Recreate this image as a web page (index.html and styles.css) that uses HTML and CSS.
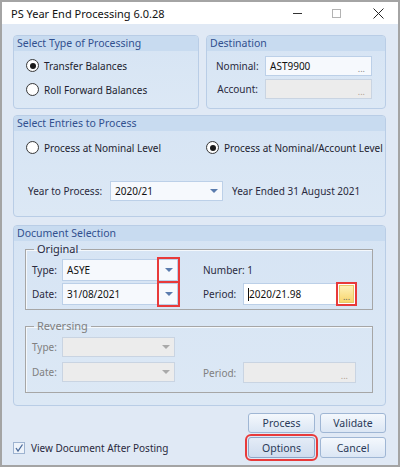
FILE: index.html
```html
<!DOCTYPE html>
<html>
<head>
<meta charset="utf-8">
<link rel="stylesheet" href="styles.css">
</head>
<body>
<div class="window">
  <div class="titlebar">
    <span class="title">PS Year End Processing 6.0.28</span>
    <div class="controls">
      <span class="ctl-min"></span>
      <span class="ctl-max"></span>
      <svg class="ctl-close" width="11" height="11" viewBox="0 0 11 11"><path d="M0.5 0.5 L10.5 10.5 M10.5 0.5 L0.5 10.5" stroke="#222" stroke-width="1" fill="none"/></svg>
    </div>
  </div>
  <div class="content">
    <div class="row-top">
      <section class="group g-type">
        <div class="ghead">Select Type of Processing</div>
        <div class="gbody type-body">
          <label class="radio"><span class="rdot on"></span>Transfer Balances</label>
          <label class="radio"><span class="rdot"></span>Roll Forward Balances</label>
        </div>
      </section>
      <section class="group g-dest">
        <div class="ghead">Destination</div>
        <div class="gbody dest-body">
          <span class="lbl">Nominal:</span>
          <div class="input"><span class="val">AST9900</span><span class="ell">...</span></div>
          <span class="lbl">Account:</span>
          <div class="input disabled"><span class="val"></span><span class="ell">...</span></div>
        </div>
      </section>
    </div>

    <section class="group g-entries">
      <div class="ghead">Select Entries to Process</div>
      <div class="gbody entries-body">
        <div class="radio-row">
          <label class="radio r-left"><span class="rdot"></span>Process at Nominal Level</label>
          <label class="radio"><span class="rdot on"></span>Process at Nominal/Account Level</label>
        </div>
        <div class="year-row">
          <span class="lbl-left">Year to Process:</span>
          <div class="combo year-combo"><span class="val">2020/21</span><span class="arrow"><span class="tri"></span></span></div>
          <span class="year-note">Year Ended 31 August 2021</span>
        </div>
      </div>
    </section>

    <section class="group g-doc">
      <div class="ghead">Document Selection</div>
      <div class="gbody doc-body">
        <fieldset class="fs fs-orig">
          <legend>Original</legend>
          <div class="fs-grid">
            <span class="lbl-left">Type:</span>
            <div class="combo orig-combo"><span class="val">ASYE</span><span class="arrow mark"><span class="tri"></span></span></div>
            <span class="lbl-left col3">Number: 1</span>
            <span></span>
            <span class="lbl-left">Date:</span>
            <div class="combo orig-combo"><span class="val">31/08/2021</span><span class="arrow mark"><span class="tri"></span></span></div>
            <span class="lbl-left col3">Period:</span>
            <div class="input period"><span class="val"><span class="caret"></span>2020/21.98</span><span class="ell-btn mark">...</span></div>
          </div>
        </fieldset>
        <fieldset class="fs fs-rev">
          <legend>Reversing</legend>
          <div class="fs-grid rev">
            <span class="lbl-left dis">Type:</span>
            <div class="combo rev-combo disabled"><span class="val"></span><span class="arrow"><span class="tri dis"></span></span></div>
            <span></span>
            <span></span>
            <span class="lbl-left dis">Date:</span>
            <div class="combo rev-combo disabled"><span class="val"></span><span class="arrow"><span class="tri dis"></span></span></div>
            <span class="lbl-left dis col3">Period:</span>
            <div class="input period disabled"><span class="val"></span><span class="ell">...</span></div>
          </div>
        </fieldset>
      </div>
    </section>

    <div class="footer">
      <label class="check"><span class="cbox"><svg width="10" height="10" viewBox="0 0 10 10"><path d="M2 5 L4 8 L8.5 1.5" stroke="#4a6a9a" stroke-width="1.3" fill="none"/></svg></span>View Document After Posting</label>
      <button class="btn b-process">Process</button>
      <button class="btn b-validate">Validate</button>
      <button class="btn b-options">Options</button>
      <button class="btn b-cancel">Cancel</button>
    </div>
  </div>
</div>
</body>
</html>
```

FILE: styles.css
```css
* { box-sizing: border-box; }
html, body { margin: 0; padding: 0; }
body {
  font-family: "Noto Sans", "Open Sans", sans-serif;
  font-size: 10px;
  color: #1e1e30;
  background: #fff;
}
.window {
  width: 400px;
  height: 467px;
  border: 2px solid #a4a4a4;
  background: #e0e9f5;
  display: flex;
  flex-direction: column;
}
.titlebar {
  height: 22px;
  background: #fff;
  display: flex;
  align-items: center;
  padding-left: 9px;
  flex: none;
}
.title {
  font-size: 11px;
  color: #111;
  flex: 1;
  padding-top: 1px;
}
.controls {
  display: flex;
  align-items: center;
  height: 100%;
  padding-right: 14px;
}
.ctl-min {
  width: 9px;
  height: 1px;
  background: #333;
  margin-right: 30px;
}
.ctl-max {
  width: 9px;
  height: 9px;
  border: 1px solid #b3b3b3;
  margin-right: 32px;
}
.ctl-close { display: block; }

.content {
  flex: 1;
  padding: 11px 12px 0 11px;
  display: flex;
  flex-direction: column;
}
.row-top {
  display: grid;
  grid-template-columns: 186px 180px;
  gap: 7px;
  height: 74px;
}
.group {
  border: 1px solid #b9cde6;
  border-radius: 4px;
  background: linear-gradient(#d6e4f4, #dce8f5);
  display: flex;
  flex-direction: column;
  overflow: hidden;
}
.ghead {
  height: 15px;
  line-height: 14px;
  padding-left: 3px;
  background: #c8dbf0;
  color: #31508f;
  font-size: 10.5px;
  flex: none;
}
.gbody { flex: 1; }

.type-body {
  padding: 8px 0 0 12px;
  display: flex;
  flex-direction: column;
  gap: 11px;
}
.radio {
  display: flex;
  align-items: center;
  height: 13px;
  white-space: nowrap;
}
.rdot {
  width: 13px;
  height: 13px;
  border-radius: 50%;
  border: 1px solid #3a3a3a;
  background: radial-gradient(circle, #fff 55%, #e8e8e8);
  margin-right: 5px;
  flex: none;
  position: relative;
}
.rdot.on::after {
  content: "";
  position: absolute;
  left: 2.5px;
  top: 2.5px;
  width: 6px;
  height: 6px;
  border-radius: 50%;
  background: #1a1a1a;
}

.dest-body {
  padding: 5px 13px 0 10px;
  display: grid;
  grid-template-columns: 42px 107px;
  column-gap: 7px;
  row-gap: 3px;
  grid-auto-rows: 20px;
  justify-content: end;
  align-items: center;
}
.lbl { text-align: right; color: #2a2a40; }
.input {
  height: 20px;
  border: 1px solid #bcd0e8;
  background: #f6f9fd;
  display: flex;
  align-items: center;
  padding-left: 4px;
  position: relative;
}
.input .val { flex: 1; color: #111; }
.ell {
  color: #8a8a8a;
  font-size: 9px;
  padding-right: 6px;
  align-self: flex-end;
  line-height: 12px;
}
.input.disabled, .combo.disabled {
  background: #ececec;
  border-color: #c9d4e2;
}
.input.disabled .ell { color: #b0a090; }

.g-entries {
  margin-top: 6px;
  height: 102px;
}
.entries-body {
  padding: 10px 0 0 12px;
}
.radio-row {
  display: flex;
  height: 13px;
}
.r-left { width: 180px; }
.year-row {
  margin-top: 27px;
  display: flex;
  align-items: center;
  height: 20px;
}
.lbl-left { white-space: nowrap; color: #2a2a40; }
.year-row .lbl-left { width: 84px; padding-left: 2px; }
.combo {
  height: 20px;
  border: 1px solid #bcd0e8;
  background: #f6f9fd;
  display: flex;
  align-items: center;
  padding-left: 4px;
}
.combo .val { flex: 1; color: #111; }
.year-combo { width: 113px; }
.arrow {
  width: 17px;
  align-self: stretch;
  display: flex;
  align-items: center;
  justify-content: center;
}
.tri {
  width: 0;
  height: 0;
  border-left: 4px solid transparent;
  border-right: 4px solid transparent;
  border-top: 4px solid #5a7cae;
}
.tri.dis { border-top-color: #a9a9a9; }
.year-note { margin-left: 9px; color: #2a2a40; }

.g-doc {
  margin-top: 8px;
  height: 181px;
}
.doc-body {
  padding: 2px 12px 0 11px;
}
.fs {
  margin: 0;
  padding: 4px 0 0 6px;
  border: 1px solid #a6a6a6;
  box-shadow: inset 1px 1px 0 #f4f8fc;
  border-radius: 0;
}
.fs legend {
  padding: 0 3px;
  margin-left: 2px;
  font-size: 11px;
  color: #2a2a40;
  line-height: 12px;
}
.fs-orig { height: 67px; }
.fs-rev { height: 73px; margin-top: 10px; }
.fs-rev legend { color: #808080; }
.fs-grid {
  display: grid;
  grid-template-columns: 30px 116px 65px 113px;
  grid-template-rows: 22px 22px;
  row-gap: 2px;
  align-items: center;
}
.col3 { padding-left: 25px; }
.fs-grid.rev { grid-template-rows: 20px 20px; row-gap: 5px; margin-top: 1px; }
.fs-grid.rev .col3 { align-self: end; padding-bottom: 2px; }
.orig-combo { height: 22px; }
.rev-combo { width: 113px; }
.dis { color: #808080; }
.period { height: 22px; padding-right: 1px; background: #fff; }
.fs-grid.rev .period { height: 21px; background: #ececec; }
.caret {
  display: inline-block;
  width: 1px;
  height: 13px;
  background: #111;
  vertical-align: -3px;
}
.ell-btn {
  width: 15px;
  height: 18px;
  background: linear-gradient(#fdf1b8, #f8d66e);
  border: 1px solid #e8c96a;
  font-size: 9px;
  color: #666;
  text-align: center;
  line-height: 22px;
}
.mark {
  outline: 2px solid #e83a3a;
  outline-offset: 1px;
}

.footer {
  margin-top: 7px;
  display: grid;
  grid-template-columns: 1fr 67px 66px;
  grid-template-rows: 20px 21px;
  column-gap: 5px;
  row-gap: 4px;
}
.check {
  grid-column: 1;
  grid-row: 2;
  display: flex;
  align-items: center;
  color: #2a2a40;
}
.cbox {
  width: 12px;
  height: 12px;
  border: 1px solid #9eb3d0;
  background: #eef3fa;
  margin-right: 6px;
  display: flex;
  align-items: center;
  justify-content: center;
}
.cbox svg { display: block; }
.b-process { grid-column: 2; grid-row: 1; }
.b-validate { grid-column: 3; grid-row: 1; }
.b-options { grid-column: 2; grid-row: 2; }
.b-cancel { grid-column: 3; grid-row: 2; }
.btn {
  font-family: inherit;
  font-size: 10.5px;
  color: #2a3a58;
  border: 1px solid #9fb6d4;
  border-radius: 3px;
  background: linear-gradient(#f4f8fd, #dbe6f4);
  padding: 0;
  height: 100%;
}
.b-options {
  background: linear-gradient(#e4ecf7, #cfdcee);
  border-color: #8ea6c8;
  outline: 2px solid #e83a3a;
  outline-offset: 1px;
}
```
